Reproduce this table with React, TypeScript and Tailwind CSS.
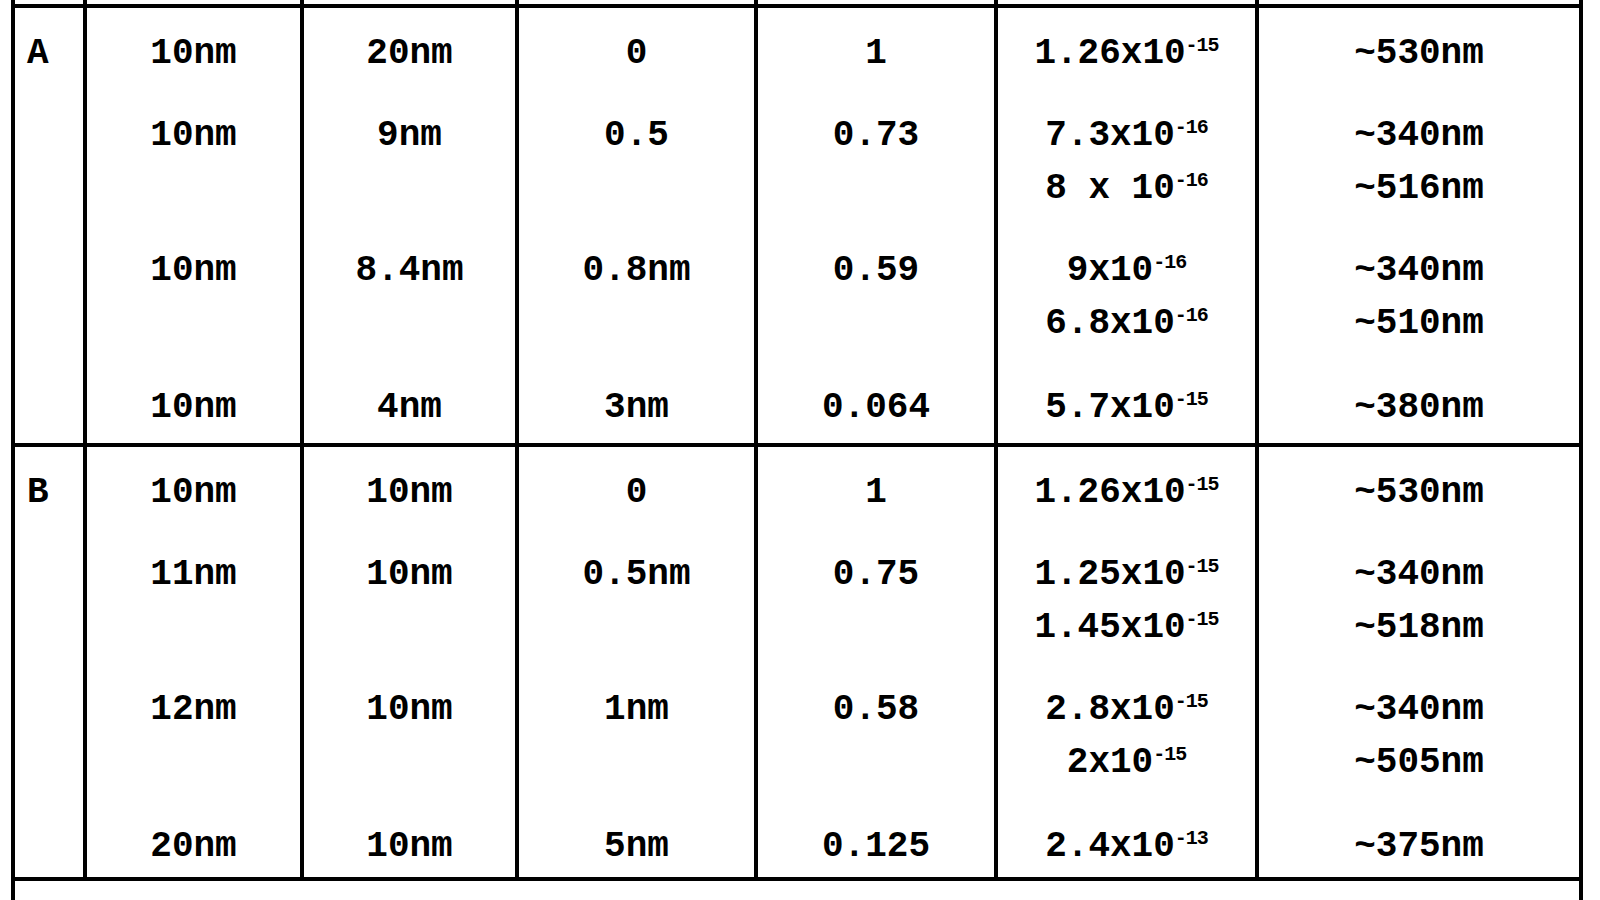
import React from "react";

type Val = string | { base: string; sup: string } | null;

const slotMargins = ["mt-[31px]", "mt-[52px]", "mt-[23px]", "mt-[52px]", "mt-[23px]", "mt-[54px]"];

function Text({ v }: { v: Val }) {
  if (v === null) return null;
  if (typeof v === "string") return <>{v}</>;
  return (
    <>
      {v.base}
      <span className="inline-block align-top relative -top-[3px] text-[20px] leading-[20px] tracking-[-1px]">{v.sup}</span>
    </>
  );
}

function Cell({ values, left }: { values: Val[]; left?: boolean }) {
  return (
    <div className={`bg-white flex flex-col ${left ? "items-start pl-[12px]" : "items-center"}`}>
      {values.map((v, i) => (
        <div key={i} className={`h-[30px] leading-[30px] whitespace-pre ${slotMargins[i]}`}>
          <Text v={v} />
        </div>
      ))}
    </div>
  );
}

const s = (base: string, sup: string) => ({ base, sup });

const sections: Val[][][] = [
  [
    ["A", null, null, null, null, null],
    ["10nm", "10nm", null, "10nm", null, "10nm"],
    ["20nm", "9nm", null, "8.4nm", null, "4nm"],
    ["0", "0.5", null, "0.8nm", null, "3nm"],
    ["1", "0.73", null, "0.59", null, "0.064"],
    [s("1.26x10", "-15"), s("7.3x10", "-16"), s("8 x 10", "-16"), s("9x10", "-16"), s("6.8x10", "-16"), s("5.7x10", "-15")],
    ["~530nm", "~340nm", "~516nm", "~340nm", "~510nm", "~380nm"],
  ],
  [
    ["B", null, null, null, null, null],
    ["10nm", "11nm", null, "12nm", null, "20nm"],
    ["10nm", "10nm", null, "10nm", null, "10nm"],
    ["0", "0.5nm", null, "1nm", null, "5nm"],
    ["1", "0.75", null, "0.58", null, "0.125"],
    [s("1.26x10", "-15"), s("1.25x10", "-15"), s("1.45x10", "-15"), s("2.8x10", "-15"), s("2x10", "-15"), s("2.4x10", "-13")],
    ["~530nm", "~340nm", "~518nm", "~340nm", "~505nm", "~375nm"],
  ],
];

export default function App() {
  return (
    <div className="w-[1600px] h-[900px] bg-white overflow-hidden pl-[11px] font-['Liberation_Mono','Courier_New',monospace] font-bold text-[36px] text-black">
      <div className="w-[1572px] h-[900px] bg-black px-[4px] grid gap-[4px] grid-cols-[68px_213px_211px_235px_236px_257px_320px] grid-rows-[4px_435px_430px_19px]">
        {Array.from({ length: 7 }).map((_, i) => (
          <div key={`stub${i}`} className="bg-white" />
        ))}
        {sections.map((sec, si) =>
          sec.map((col, ci) => <Cell key={`${si}-${ci}`} values={col} left={ci === 0} />)
        )}
        <div className="bg-white col-span-7" />
      </div>
    </div>
  );
}
